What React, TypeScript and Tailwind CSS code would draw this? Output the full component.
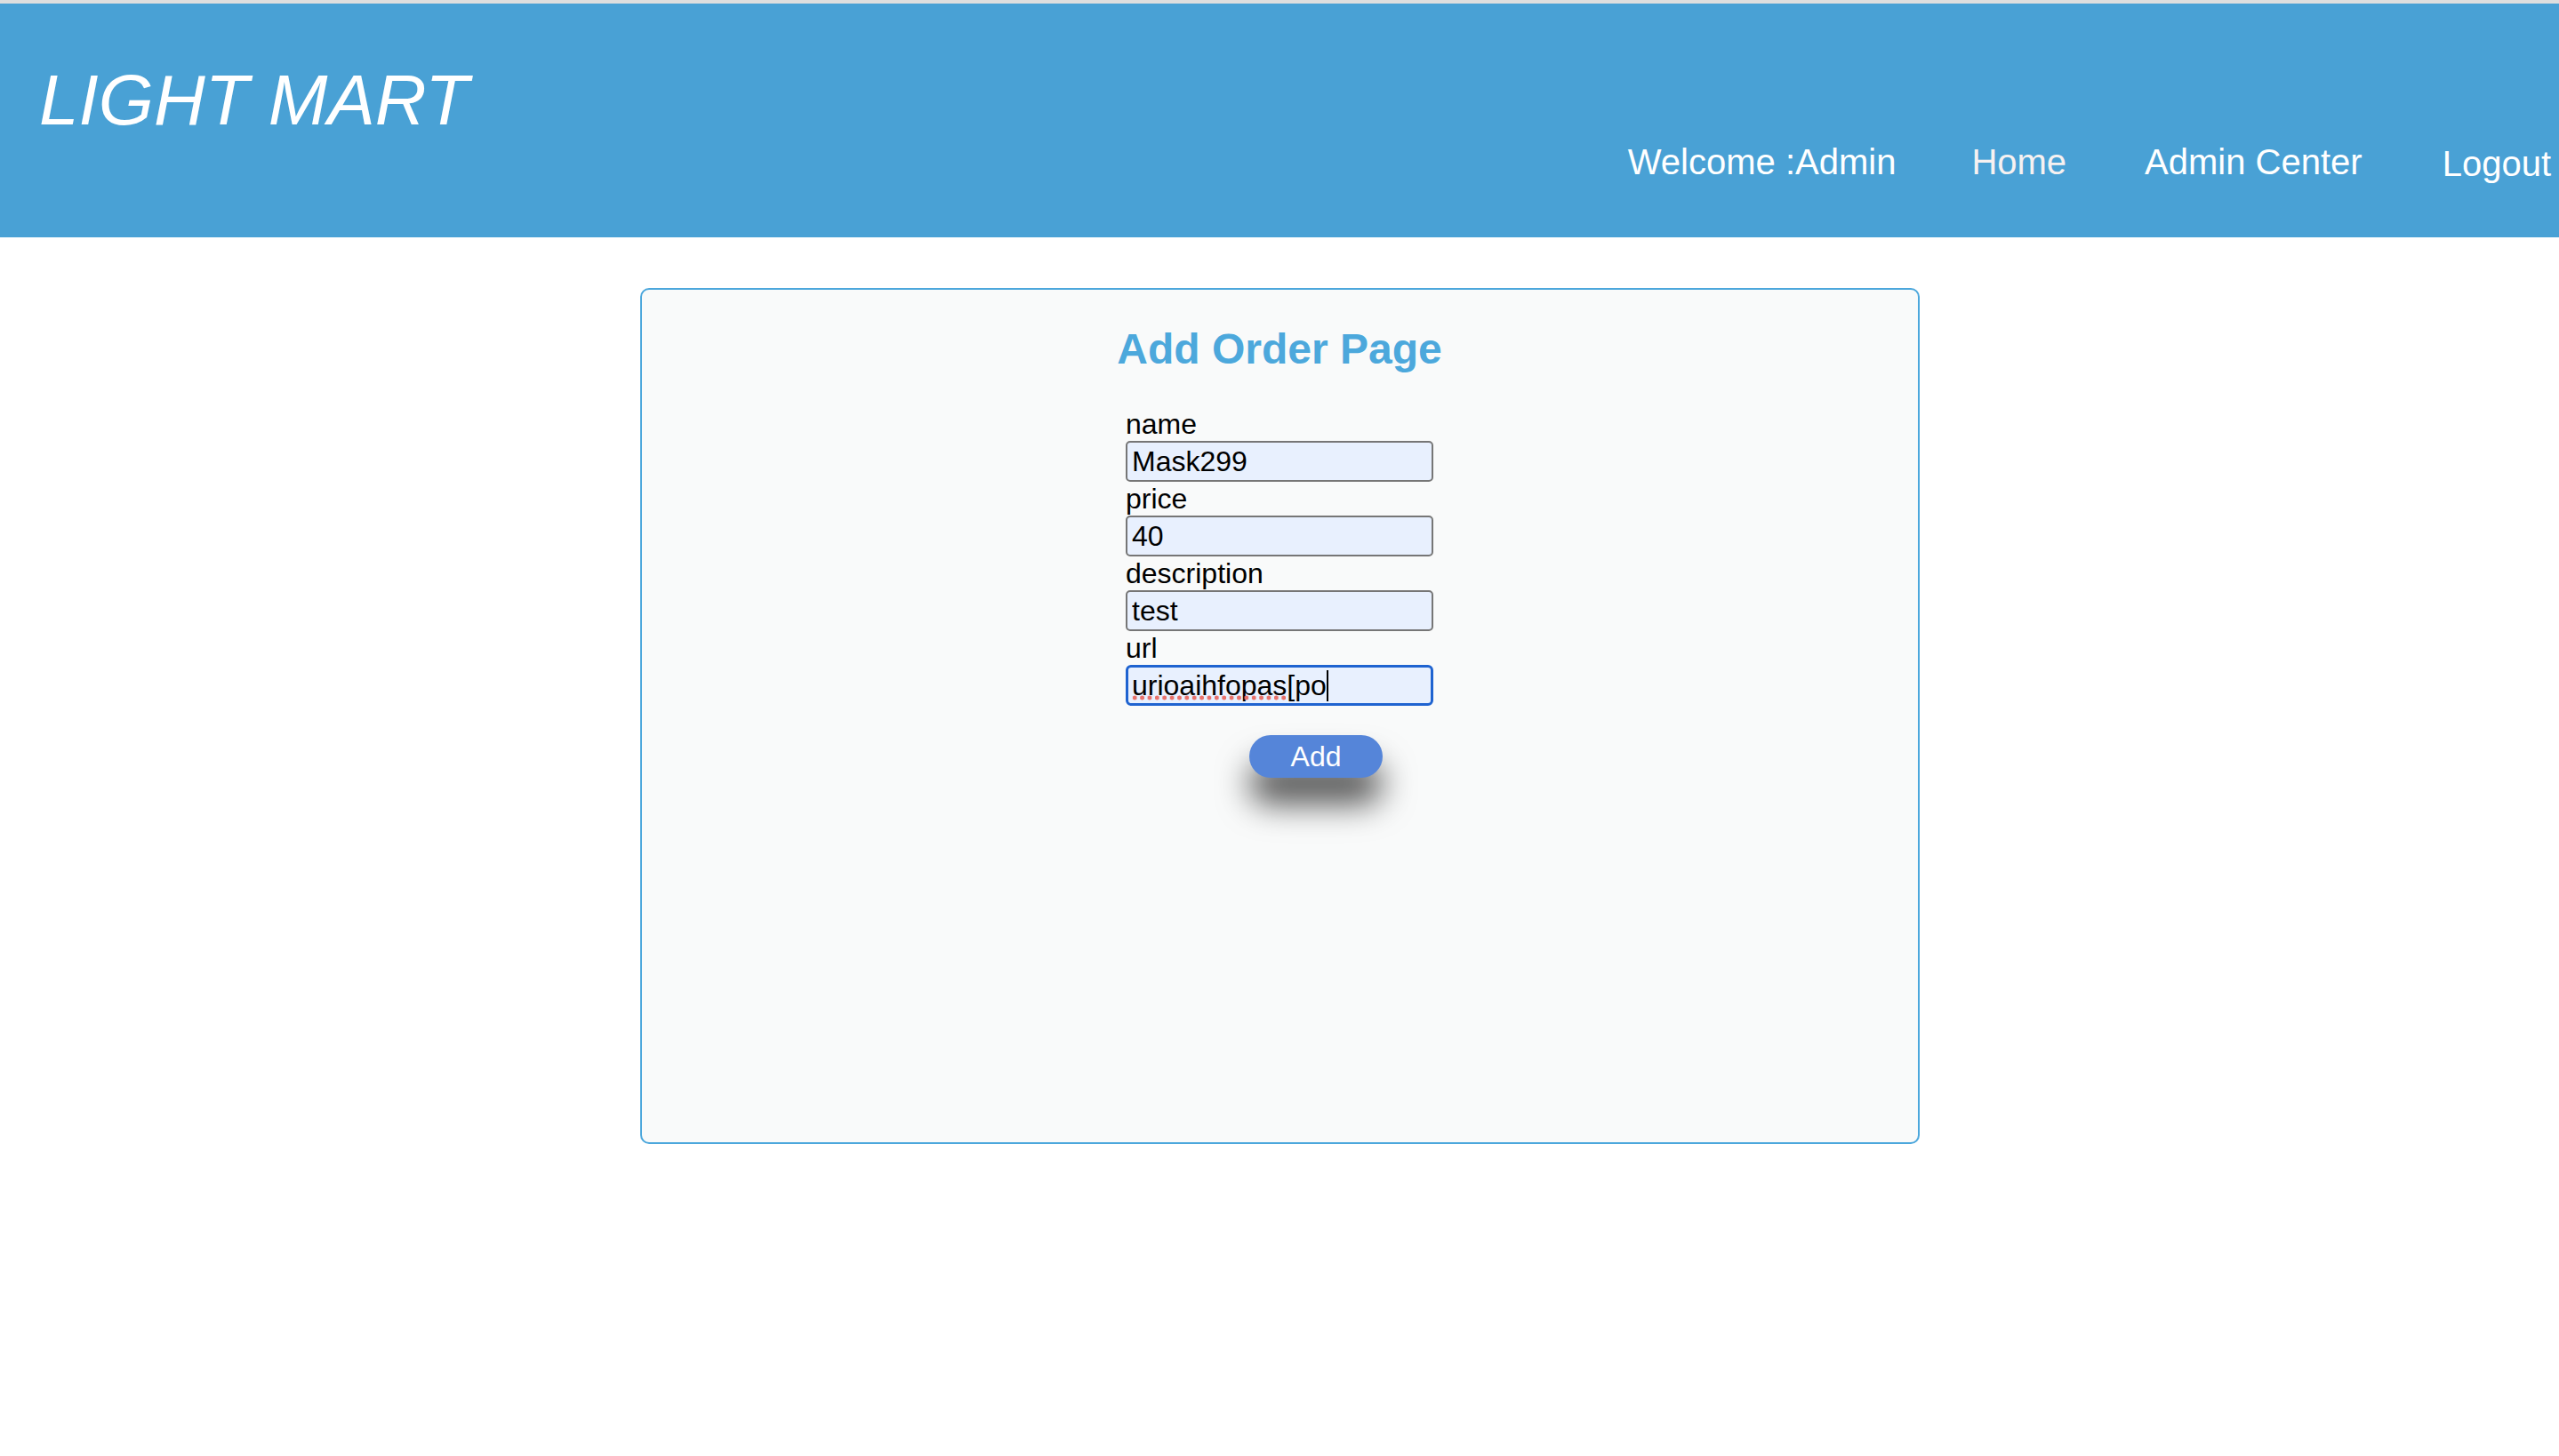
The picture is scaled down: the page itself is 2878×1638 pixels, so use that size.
import React from "react";

const fields = [
  { label: "name", value: "Mask299" },
  { label: "price", value: "40" },
  { label: "description", value: "test" },
];

export default function App() {
  return (
    <div className="min-h-screen bg-white font-['Liberation_Sans',Arial,sans-serif] text-black">
      <div className="h-[4px] bg-[#dedede]" />
      {/* Top bar */}
      <header className="h-[263px] bg-[#49a1d5] flex justify-between items-start text-white">
        <h1 className="pl-[44px] pt-[63px] text-[80px] italic font-normal leading-[92px]">LIGHT MART</h1>
        <nav className="flex items-start mt-[155px] pr-[9px] text-[40px] leading-[46px]">
          <span>Welcome :Admin</span>
          <a className="ml-[85px] text-[#f6f1f1]">Home</a>
          <a className="ml-[88px]">Admin Center</a>
          <a className="ml-[90px] mt-[2px]">Logout</a>
        </nav>
      </header>

      <main className="mt-[57px] mx-auto w-1/2 h-[963px] border-2 border-[#4ca7dc] rounded-[10px] bg-[#f9fafa]">
        <h2 className="pt-[39px] text-center text-[48px] font-bold leading-[55px] text-[#4ca8dc]">Add Order Page</h2>

        <form className="w-[346px] mx-auto mt-[38px] flex flex-col" onSubmit={(e) => e.preventDefault()}>
          {fields.map((f) => (
            <label key={f.label} className="flex flex-col">
              <span className="text-[32px] leading-[38px]">{f.label}</span>
              <input
                defaultValue={f.value}
                className="h-[46px] w-full border-2 border-[#767676] rounded-[5px] bg-[#e8f0fe] px-[5px] text-[32px] leading-[37px] outline-none"
              />
            </label>
          ))}
          <label className="flex flex-col">
            <span className="text-[32px] leading-[38px]">url</span>
            <div className="relative">
              <input
                defaultValue="urioaihfopas[po"
                className="h-[46px] w-full border-[3px] border-[#1f63d0] rounded-[6px] bg-[#e8f0fe] px-[4px] text-[32px] leading-[37px] outline-none caret-transparent"
              />
              {/* spellcheck underline + caret */}
              <div className="absolute left-[6px] top-[34px] w-[176px] h-[6px] bg-[radial-gradient(circle,#e8716a_2.2px,transparent_2.8px)] bg-[length:8.38px_6px]" />
              <div className="absolute left-[226px] top-[6px] w-[2px] h-[35px] bg-black" />
            </div>
          </label>

          <div className="flex justify-center mt-[33px]">
            <button
              type="submit"
              className="ml-[82px] w-[150px] h-[48px] rounded-full bg-[#5585d9] text-white text-[32px] leading-[48px] shadow-[0_30px_36px_rgba(0,0,0,0.65)]"
            >
              Add
            </button>
          </div>
        </form>
      </main>
    </div>
  );
}
